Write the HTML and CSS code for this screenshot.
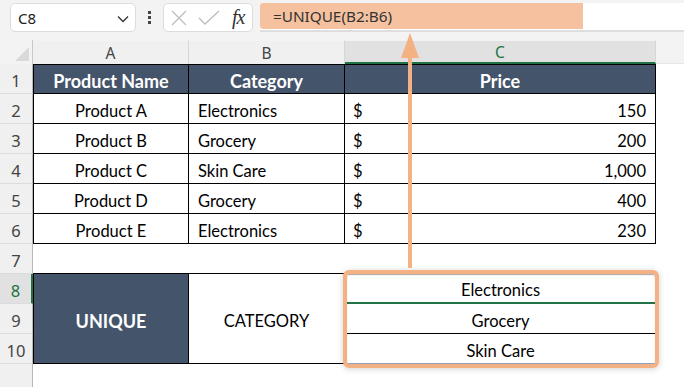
FILE: index.html
```html
<!DOCTYPE html>
<html>
<head>
<meta charset="utf-8">
<link rel="stylesheet" href="styles.css">
</head>
<body>
<div class="app">
  <div class="toolbar">
    <div class="namebox">
      <span class="namebox-text">C8</span>
      <svg class="chev" width="12" height="8" viewBox="0 0 12 8"><path d="M1 1.5 L6 6.5 L11 1.5" fill="none" stroke="#333" stroke-width="1.3"/></svg>
    </div>
    <div class="dots"><i></i><i></i><i></i></div>
    <div class="fxbox">
      <svg width="16" height="16" viewBox="0 0 16 16"><path d="M1 1 L15 15 M15 1 L1 15" stroke="#bdbdbd" stroke-width="1.3" fill="none"/></svg>
      <svg width="22" height="16" viewBox="0 0 22 16"><path d="M1 8 L7 14 L21 1" stroke="#bdbdbd" stroke-width="1.3" fill="none"/></svg>
      <span class="fx">fx</span>
    </div>
    <div class="formula">
      <div class="formula-fill"><span class="formula-text">=UNIQUE(B2:B6)</span></div>
    </div>
  </div>

  <div class="sheet">
    <div class="corner"><span class="tri"></span></div>
    <div class="colhdr">A</div>
    <div class="colhdr">B</div>
    <div class="colhdr sel">C</div>
    <div class="colrest"></div>

    <div class="rowhdr">1</div>
    <div class="c th bl bt">Product Name</div>
    <div class="c th bt">Category</div>
    <div class="c th bt">Price</div>
    <div class="rest"></div>

    <div class="rowhdr">2</div>
    <div class="c ctr bl">Product A</div>
    <div class="c left">Electronics</div>
    <div class="c money"><span>$</span><span>150</span></div>
    <div class="rest"></div>

    <div class="rowhdr">3</div>
    <div class="c ctr bl">Product B</div>
    <div class="c left">Grocery</div>
    <div class="c money"><span>$</span><span>200</span></div>
    <div class="rest"></div>

    <div class="rowhdr">4</div>
    <div class="c ctr bl">Product C</div>
    <div class="c left">Skin Care</div>
    <div class="c money"><span>$</span><span>1,000</span></div>
    <div class="rest"></div>

    <div class="rowhdr">5</div>
    <div class="c ctr bl">Product D</div>
    <div class="c left">Grocery</div>
    <div class="c money"><span>$</span><span>400</span></div>
    <div class="rest"></div>

    <div class="rowhdr">6</div>
    <div class="c ctr bl">Product E</div>
    <div class="c left">Electronics</div>
    <div class="c money"><span>$</span><span>230</span></div>
    <div class="rest"></div>

    <div class="rowhdr">7</div>
    <div class="empty7"></div>
    <div class="empty7"></div>
    <div class="empty7c"></div>
    <div class="rest"></div>

    <div class="rowhdr selrow">8</div>
    <div class="c th merged uq bl">UNIQUE</div>
    <div class="c ctr merged cat">CATEGORY</div>
    <div class="c ctr res r8">Electronics</div>
    <div class="rest"></div>

    <div class="rowhdr">9</div>
    <div class="c ctr res r9">Grocery</div>
    <div class="rest"></div>

    <div class="rowhdr">10</div>
    <div class="c ctr res r10">Skin Care</div>
    <div class="rest"></div>

    <div class="rowhdr tail"></div>
    <div class="tailfill"></div>
  </div>

  <div class="hl-box"></div>
  <svg class="arrow" width="24" height="240" viewBox="0 0 24 240">
    <polygon points="11,0 2,25 20,25" fill="#f4b183"/>
    <rect x="9" y="22" width="4" height="213" fill="#f4b183"/>
  </svg>
</div>
</body>
</html>
```

FILE: styles.css
```css
* { box-sizing: border-box; }
html, body { margin: 0; padding: 0; background: #fff; }
body { width: 684px; height: 387px; overflow: hidden; }

.app { position: relative; width: 684px; height: 387px; }

.toolbar {
  height: 40px;
  background: #f3f3f3;
  display: flex;
  align-items: flex-start;
  padding-top: 3px;
}

.namebox {
  margin-left: 10px;
  width: 126px;
  height: 29px;
  background: #fff;
  border: 1px solid #dcdcdc;
  border-radius: 5px;
  display: flex;
  align-items: center;
  justify-content: space-between;
  padding: 0 6px 0 7px;
  font-family: "Noto Sans", sans-serif;
  font-size: 15px;
  color: #222;
}
.chev { margin-top: 2px; }

.dots {
  width: 27px;
  height: 29px;
  display: flex;
  flex-direction: column;
  align-items: center;
  justify-content: center;
  gap: 2px;
}
.dots i { display: block; width: 3px; height: 3px; background: #444; }

.fxbox {
  width: 90px;
  height: 29px;
  background: #fff;
  border: 1px solid #dcdcdc;
  border-radius: 5px;
  display: flex;
  align-items: center;
  padding-left: 7px;
  gap: 11px;
}
.fx {
  font-family: "Liberation Serif", serif;
  font-style: italic;
  font-size: 20px;
  color: #333;
  margin-left: 1px;
  letter-spacing: -1px;
}

.formula {
  margin-left: 7px;
  flex: 1;
  height: 29px;
  background: #fff;
  border-bottom: 2px solid #dedede;
}
.formula-fill {
  width: 323px;
  height: 26px;
  background: #f5c19e;
  border-radius: 3px 0 0 3px;
  display: flex;
  align-items: center;
  padding-left: 13px;
}
.formula-text {
  font-family: "Noto Sans", sans-serif;
  font-size: 15.3px;
  color: #333;
}

.sheet {
  display: grid;
  grid-template-columns: 33px 156px 156px 311px 28px;
  grid-template-rows: 24px repeat(10, 30px) 23px;
  font-family: Lato, "Liberation Sans", sans-serif;
  font-size: 16.5px;
  color: #000;
}

.corner {
  background: #f3f3f3;
  border-right: 1px solid #c8c8c8;
  position: relative;
}
.tri {
  position: absolute;
  right: 3px;
  bottom: 3px;
  width: 0; height: 0;
  border-left: 14px solid transparent;
  border-bottom: 14px solid #dadada;
}

.colhdr {
  background: #f0f0f0;
  border-right: 1px solid #d6d6d6;
  border-top: 1px solid #f3f3f3;
  display: flex;
  align-items: center;
  justify-content: center;
  font-family: "Noto Sans", sans-serif;
  font-size: 15.5px;
  color: #444;
  padding-top: 1px;
}
.colhdr.sel {
  background: #e1e1e1;
  color: #217346;
  border-bottom: 2px solid #217346;
}
.colrest { background: #f3f3f3; border-bottom: 1px solid #e6e6e6; }

.rowhdr {
  grid-column: 1;
  background: #f0f0f0;
  border-right: 1px solid #b8b8b8;
  border-bottom: 1px solid #dcdcdc;
  display: flex;
  align-items: center;
  justify-content: center;
  font-family: "Noto Sans", sans-serif;
  font-size: 16.5px;
  color: #444;
  padding-top: 4px;
}
.rowhdr.selrow {
  background: #e1e1e1;
  color: #217346;
  border-right: 2px solid #217346;
}
.rowhdr.tail { border-bottom: none; }

.c {
  border-right: 1px solid #000;
  border-bottom: 1px solid #000;
  display: flex;
  align-items: center;
  padding-top: 4px;
}
.bl { border-left: 1px solid #000; }
.bt { border-top: 1px solid #000; }
.th {
  background: #44546a;
  color: #fff;
  font-weight: 700;
  font-size: 18px;
  justify-content: center;
}
.ctr { justify-content: center; }
.left { padding-left: 9px; }
.money { justify-content: space-between; padding: 4px 9px 0 8px; }

.rest { background: #fff; }

.empty7 { border-bottom: 1px solid #000; }
.empty7c { }

.merged { grid-row: span 3; }
.uq { border-top: none; }
.cat { border-top: none; }

.res { grid-column: 4; border-right: none; }
.r8 { border-bottom: 2px solid #217346; }
.r10 { border-bottom: 1px solid #8e9fc4; }

.tailfill { grid-column: 2 / 6; background: #fff; }

.hl-box {
  position: absolute;
  left: 343px;
  top: 270px;
  width: 316px;
  height: 98px;
  border: 4px solid #f4b183;
  border-radius: 6px;
  box-shadow: 0 1px 6px rgba(0,0,0,0.18), inset 0 1px 1px rgba(0,0,0,0.35);
}

.arrow {
  position: absolute;
  left: 399px;
  top: 33px;
}
```
